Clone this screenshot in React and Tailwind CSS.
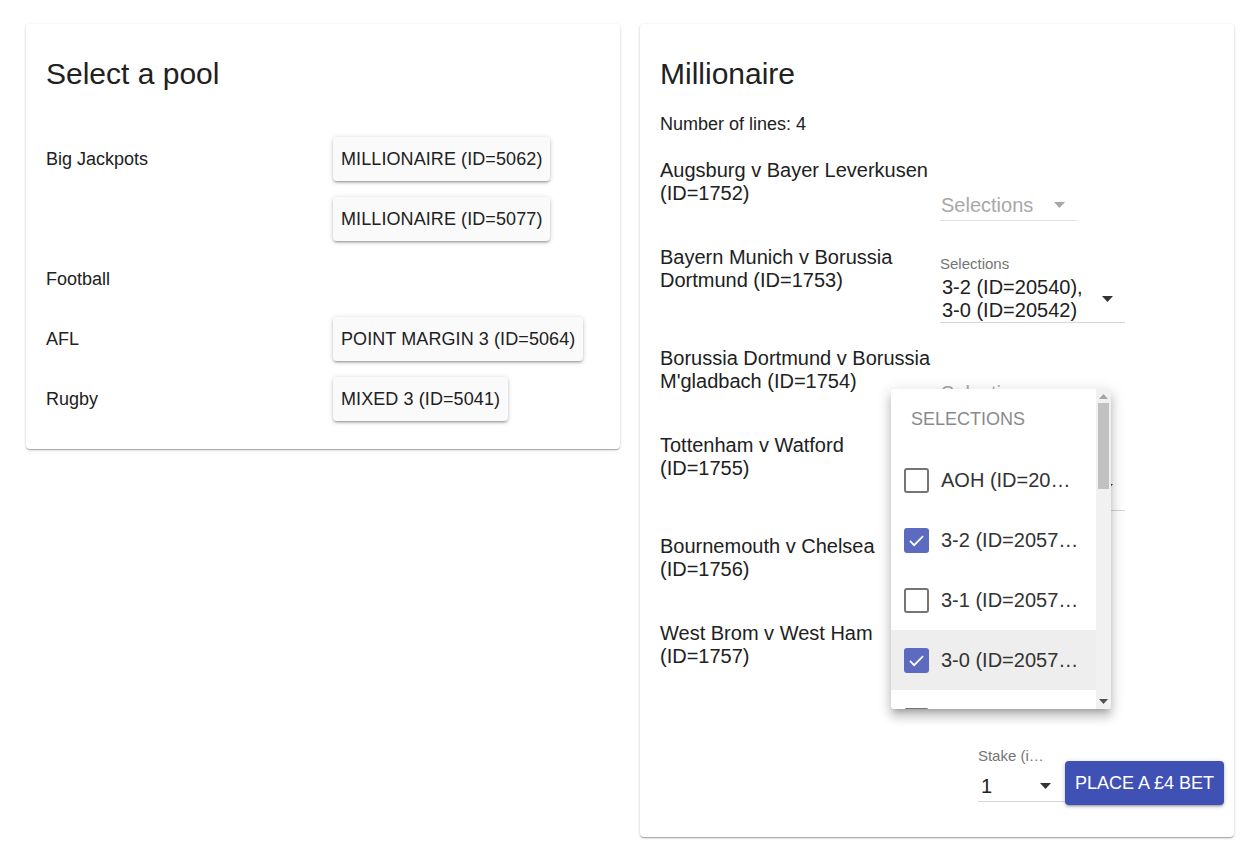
import { useState } from "react";

const paper =
  "rounded-[4px] bg-white shadow-[0_1px_3px_0_rgba(0,0,0,0.2),0_1px_1px_0_rgba(0,0,0,0.14),0_2px_1px_-1px_rgba(0,0,0,0.12)]";

const pools = [
  { group: "Big Jackpots", items: ["MILLIONAIRE (ID=5062)", "MILLIONAIRE (ID=5077)"] },
  { group: "Football", items: [] },
  { group: "AFL", items: ["POINT MARGIN 3 (ID=5064)"] },
  { group: "Rugby", items: ["MIXED 3 (ID=5041)"] },
];

const matches = [
  { name: "Augsburg v Bayer Leverkusen (ID=1752)", values: null },
  { name: "Bayern Munich v Borussia Dortmund (ID=1753)", values: ["3-2 (ID=20540),", "3-0 (ID=20542)"] },
  { name: "Borussia Dortmund v Borussia M'gladbach (ID=1754)", values: null },
  { name: "Tottenham v Watford (ID=1755)", values: ["3-2 (ID=20572),", "3-0 (ID=20574)"] },
  { name: "Bournemouth v Chelsea (ID=1756)", values: null },
  { name: "West Brom v West Ham (ID=1757)", values: null },
];

const options = [
  { label: "AOH (ID=20…", checked: false },
  { label: "3-2 (ID=2057…", checked: true },
  { label: "3-1 (ID=2057…", checked: false },
  { label: "3-0 (ID=2057…", checked: true, hover: true },
  { label: "2-2 (ID=2057…", checked: false },
];

function Arrow({ color = "#333333" }) {
  return (
    <svg width="11" height="6" viewBox="0 0 11 6" className="shrink-0">
      <path d="M0 0h11L5.5 6z" fill={color} />
    </svg>
  );
}

function Checkbox({ checked }) {
  if (checked) {
    return (
      <div className="flex h-[25px] w-[25px] shrink-0 items-center justify-center rounded-[3px] bg-[#5c6bc0]">
        <svg width="21" height="21" viewBox="0 0 24 24">
          <path d="M4.5 12.5l4.8 4.8L19.5 7" fill="none" stroke="white" strokeWidth="2" />
        </svg>
      </div>
    );
  }
  return <div className="h-[25px] w-[25px] shrink-0 rounded-[3px] border-2 border-[#757575]" />;
}

function MatchRow({ match }) {
  return (
    <div className={`flex items-start ${match.values ? "pb-[24px]" : "pb-[25px]"}`}>
      <div className="w-[274px] text-[20px] leading-[23px] text-[#212121]">{match.name}</div>
      {match.values ? (
        <div className="ml-[6px] w-[185px] pt-[9px]">
          <div className="text-[15px] leading-[18px] text-[#757575]">Selections</div>
          <div className="mt-[3px] flex items-center justify-between border-b border-[#d6d6d6] pr-[12px]">
            <div className="pl-[2px] text-[20px] leading-[23px] text-[#212121]">
              {match.values[0]}
              <br />
              {match.values[1]}
            </div>
            <Arrow />
          </div>
        </div>
      ) : (
        <div className="ml-[6px] w-[137px] pt-[30px]">
          <div className="flex h-[32px] items-center justify-between border-b border-[#e0e0e0] pl-px pr-[12px]">
            <span className="text-[20px] text-[#a8a8a8]">Selections</span>
            <Arrow color="#a8a8a8" />
          </div>
        </div>
      )}
    </div>
  );
}

function SelectionsMenu() {
  return (
    <div className="absolute left-[251px] top-[365px] flex h-[320px] w-[220px] overflow-hidden rounded-[3px] bg-white shadow-[0_5px_5px_-3px_rgba(0,0,0,0.2),0_8px_10px_1px_rgba(0,0,0,0.14),0_3px_14px_2px_rgba(0,0,0,0.12)]">
      <div className="w-[205px]">
        <div className="h-[61px] pl-[20px] pt-[19px] text-[18px] leading-[22px] text-[#8a8a8a]">SELECTIONS</div>
        {options.map((o) => (
          <div
            key={o.label}
            className={`flex h-[60px] items-center gap-[12px] pl-[13px] ${o.hover ? "bg-[#eeeeee]" : ""}`}
          >
            <Checkbox checked={o.checked} />
            <span className="whitespace-nowrap text-[20px] text-[#333333]">{o.label}</span>
          </div>
        ))}
      </div>
      <div className="flex w-[15px] flex-col items-center bg-[#f1f1f1]">
        <svg width="9" height="5" viewBox="0 0 9 5" className="mt-[5px]">
          <path d="M0 5h9L4.5 0z" fill="#a3a3a3" />
        </svg>
        <div className="mt-[4px] h-[86px] w-[11px] bg-[#c1c1c1]" />
        <div className="flex-1" />
        <svg width="9" height="5" viewBox="0 0 9 5" className="mb-[5px]">
          <path d="M0 0h9L4.5 5z" fill="#505050" />
        </svg>
      </div>
    </div>
  );
}

export default function App() {
  const [pool] = useState("Millionaire");

  return (
    <div className="flex min-h-screen items-start gap-5 bg-white pl-[26px] pt-[24px] font-['Liberation_Sans',Arial,sans-serif] text-[#212121]">
      <div className={`${paper} w-[594px] px-5 pt-5 pb-5`}>
        <div className="flex h-[59px] items-center text-[30px]">Select a pool</div>
        <div className="mt-[26px]">
          {pools.map((p) => (
            <div key={p.group}>
              {(p.items.length ? p.items : [null]).map((item, i) => (
                <div key={i} className="flex h-[60px] items-center">
                  <div className="w-[287px] text-[18px]">{i === 0 ? p.group : ""}</div>
                  {item && (
                    <button className="h-[44px] rounded-[4px] bg-[#fafafa] px-2 text-[18px] tracking-[0.005em] text-[#212121] shadow-[0_1px_5px_0_rgba(0,0,0,0.2),0_2px_2px_0_rgba(0,0,0,0.14),0_3px_1px_-2px_rgba(0,0,0,0.12)]">
                      {item}
                    </button>
                  )}
                </div>
              ))}
            </div>
          ))}
        </div>
      </div>

      <div className={`${paper} relative w-[594px] px-5 pt-5 pb-[32px]`}>
        <div className="flex h-[59px] items-center text-[30px]">{pool}</div>
        <div className="mt-[9px] text-[18px] leading-[24px]">Number of lines: 4</div>
        <div className="mt-[23px]">
          {matches.map((m) => (
            <MatchRow key={m.name} match={m} />
          ))}
        </div>
        <div className="-mr-[10px] mt-[38px] flex items-start justify-end">
          <div className="w-[87px]">
            <div className="text-[15px] leading-[18px] text-[#757575]">Stake (i…</div>
            <div className="mt-[5px] flex h-[32px] items-center justify-between border-b border-[#d6d6d6] pl-[3px] pr-[14px]">
              <span className="text-[20px] text-[#212121]">1</span>
              <Arrow />
            </div>
          </div>
          <button className="mt-[14px] h-[44px] rounded-[4px] bg-[#3f51b5] px-[10px] text-[18px] text-white shadow-[0_1px_5px_0_rgba(0,0,0,0.2),0_2px_2px_0_rgba(0,0,0,0.14),0_3px_1px_-2px_rgba(0,0,0,0.12)]">
            PLACE A £4 BET
          </button>
        </div>
        <SelectionsMenu />
      </div>
    </div>
  );
}
